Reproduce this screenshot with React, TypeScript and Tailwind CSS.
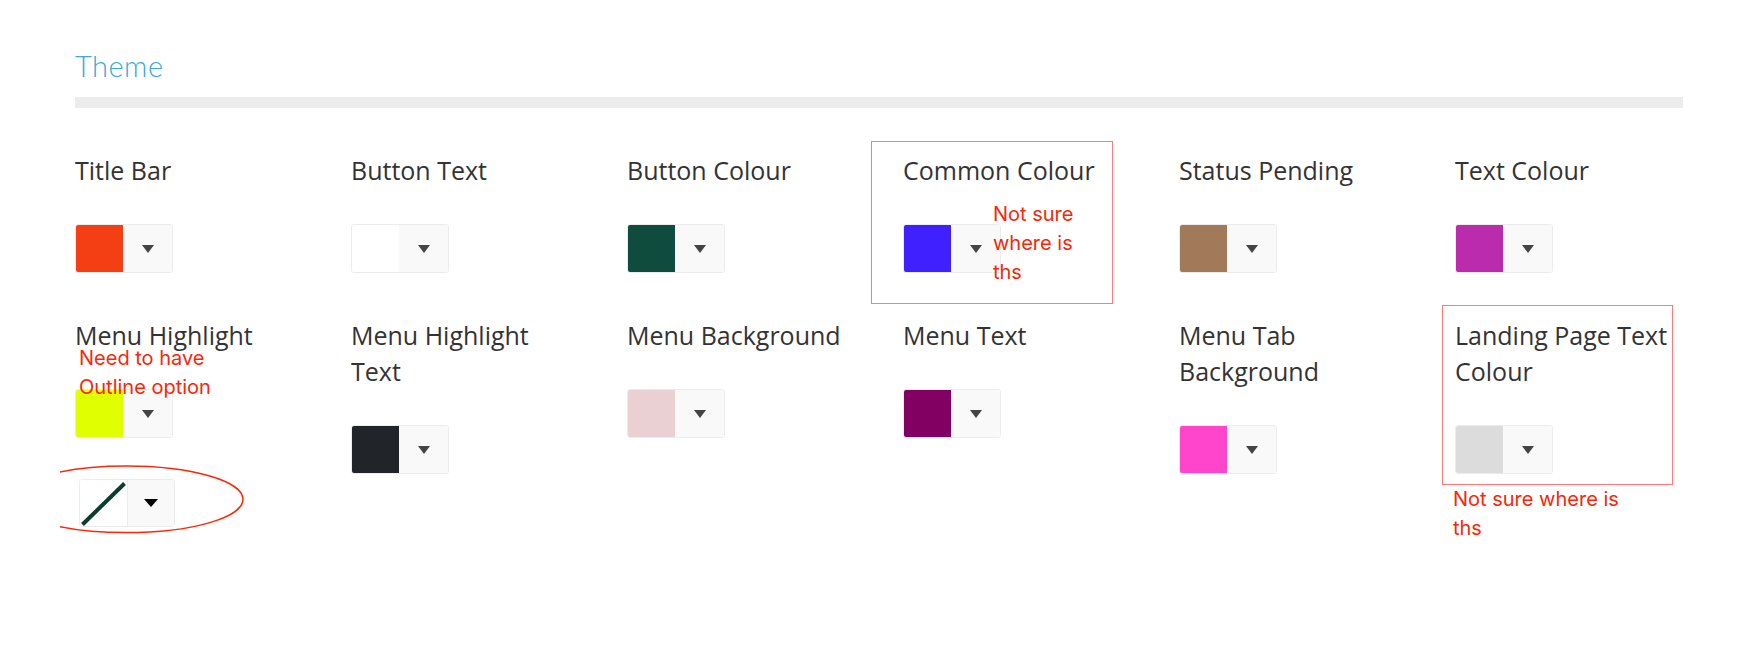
import { ReactNode } from "react";

type Field = {
  id: string;
  label: string;
  swatch: string;
};

const fields: Field[] = [
  { id: "title-bar", label: "Title Bar", swatch: "bg-[#f43f14]" },
  { id: "button-text", label: "Button Text", swatch: "bg-white" },
  { id: "button-colour", label: "Button Colour", swatch: "bg-[#0f4c3e]" },
  { id: "common-colour", label: "Common Colour", swatch: "bg-[#4020ff]" },
  { id: "status-pending", label: "Status Pending", swatch: "bg-[#a27a5a]" },
  { id: "text-colour", label: "Text Colour", swatch: "bg-[#bb2bae]" },
  { id: "menu-highlight", label: "Menu Highlight", swatch: "bg-[#e0ff00]" },
  { id: "menu-highlight-text", label: "Menu Highlight Text", swatch: "bg-[#212428]" },
  { id: "menu-background", label: "Menu Background", swatch: "bg-[#ebd0d3]" },
  { id: "menu-text", label: "Menu Text", swatch: "bg-[#820062]" },
  { id: "menu-tab-background", label: "Menu Tab Background", swatch: "bg-[#ff45cc]" },
  { id: "landing-text", label: "Landing Page Text Colour", swatch: "bg-[#dcdcdc]" },
];

function Caret({ strong = false }: { strong?: boolean }) {
  return strong ? (
    <svg width="14" height="8" viewBox="0 0 14 8">
      <polygon points="0,0 14,0 7,8" fill="#000" />
    </svg>
  ) : (
    <svg width="12" height="8" viewBox="0 0 12 8">
      <polygon points="0,0 12,0 6,8" fill="#444" />
    </svg>
  );
}

function ColourPicker({ swatch }: { swatch: string }) {
  return (
    <div className="flex h-[49px] w-[98px] overflow-hidden rounded-[3px] border border-[#ececec]">
      <div className={`w-[47px] ${swatch}`} />
      <div className="flex flex-1 items-center justify-center bg-[#f9f9f9]">
        <Caret />
      </div>
    </div>
  );
}

// outline-style picker the reviewer sketched under Menu Highlight
function OutlinePicker() {
  return (
    <div className="ml-1 mt-[41px] flex h-[48px] w-[96px] overflow-hidden rounded-[3px] border border-[#ececec]">
      <div className="w-[47px] bg-white">
        <svg width="47" height="48" viewBox="0 0 47 48">
          <line x1="2.5" y1="44.5" x2="44.5" y2="3.5" stroke="#0b3d2e" strokeWidth="4" />
        </svg>
      </div>
      <div className="flex flex-1 items-center justify-center border-l border-[#ececec] bg-[#f9f9f9]">
        <Caret strong />
      </div>
    </div>
  );
}

function Note({ className, children }: { className: string; children: ReactNode }) {
  return (
    <div
      className={`absolute font-['Inter',sans-serif] text-[20px] leading-[29px] text-[#f5280a] ${className}`}
    >
      {children}
    </div>
  );
}

function Cell({ field }: { field: Field }) {
  return (
    <div className="relative flex w-[276px] flex-col items-start">
      <div className="w-[222px] text-[25px] leading-9 text-[#333]">{field.label}</div>
      <div className="mt-9">
        <ColourPicker swatch={field.swatch} />
      </div>

      {field.id === "common-colour" && (
        <>
          <div className="pointer-events-none absolute left-[-32px] top-[-11px] h-[163px] w-[242px] border-[1.5px] border-[#ff7b7b]" />
          <Note className="left-[90px] top-[48px] w-[100px]">Not sure where is ths</Note>
        </>
      )}

      {field.id === "menu-highlight" && (
        <>
          <Note className="left-[4px] top-[27px] w-[150px]">Need to have Outline option</Note>
          <OutlinePicker />
          <svg
            className="pointer-events-none absolute left-[-15px] top-[145px]"
            width="200"
            height="80"
            viewBox="0 0 200 80"
          >
            <ellipse cx="66.6" cy="37.3" rx="116.4" ry="33.3" fill="none" stroke="#f52a0c" strokeWidth="1.5" />
          </svg>
        </>
      )}

      {field.id === "landing-text" && (
        <>
          <div className="pointer-events-none absolute left-[-13px] top-[-12px] h-[180px] w-[231px] border-[1.5px] border-[#ff7b7b]" />
          <Note className="left-[-2px] top-[168px] w-[190px]">Not sure where is ths</Note>
        </>
      )}
    </div>
  );
}

export default function App() {
  return (
    <div className="h-[660px] w-[1743px] bg-white pl-[75px] pr-[60px] pt-[49px] font-['Open_Sans',sans-serif]">
      <h2 className="font-['Lato',sans-serif] text-[29px] font-light leading-[34px] tracking-[0.5px] text-[#3ea9d8]">
        Theme
      </h2>
      <div className="mt-[14px] h-[11px] bg-[#ececec]" />

      <div className="mt-[44px] grid grid-cols-[repeat(6,276px)] gap-y-[44px]">
        {fields.map((f) => (
          <Cell key={f.id} field={f} />
        ))}
      </div>
    </div>
  );
}
